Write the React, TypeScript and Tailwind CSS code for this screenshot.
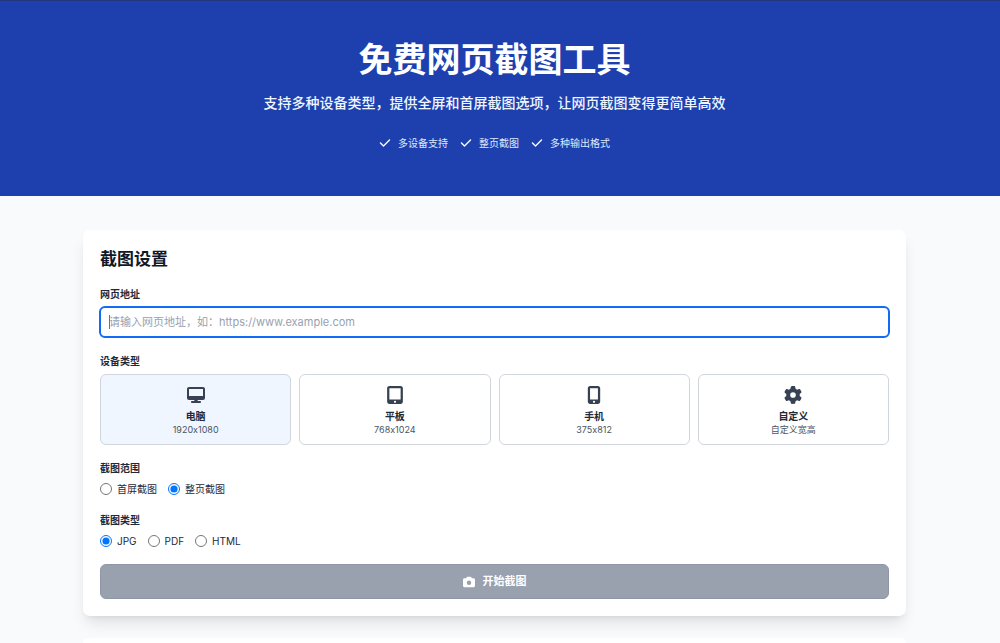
import { useState } from "react";
import {
  FaCamera,
  FaCheck,
  FaDesktop,
  FaGear,
  FaMobileScreenButton,
  FaTabletScreenButton,
} from "react-icons/fa6";

const features = ["多设备支持", "整页截图", "多种输出格式"];

const devices = [
  { id: "desktop", name: "电脑", size: "1920x1080", Icon: FaDesktop },
  { id: "tablet", name: "平板", size: "768x1024", Icon: FaTabletScreenButton },
  { id: "mobile", name: "手机", size: "375x812", Icon: FaMobileScreenButton },
  { id: "custom", name: "自定义", size: "自定义宽高", Icon: FaGear },
];

const ranges = [
  { value: "viewport", label: "首屏截图" },
  { value: "full", label: "整页截图" },
];

const formats = [
  { value: "jpg", label: "JPG" },
  { value: "pdf", label: "PDF" },
  { value: "html", label: "HTML" },
];

type RadioGroupProps = {
  legend: string;
  name: string;
  options: { value: string; label: string }[];
  value: string;
  onChange: (value: string) => void;
};

function RadioGroup({ legend, name, options, value, onChange }: RadioGroupProps) {
  return (
    <fieldset>
      <legend className="text-[10px] leading-4 font-semibold text-gray-800">{legend}</legend>
      <div className="mt-[5px] flex gap-[11px]">
        {options.map((option) => (
          <label key={option.value} className="flex items-center gap-[5px] text-[10px] leading-4 text-gray-800">
            <input
              type="radio"
              name={name}
              value={option.value}
              checked={value === option.value}
              onChange={() => onChange(option.value)}
              className="size-3 accent-[#0075ff]"
            />
            {option.label}
          </label>
        ))}
      </div>
    </fieldset>
  );
}

function Hero() {
  return (
    <header className="border-t border-[#24367c] bg-[#1e40af] pt-[39px] pr-[11px] pb-[45px] text-center text-white">
      <h1 className="text-[34px] leading-10 font-bold">免费网页截图工具</h1>
      <p className="mt-[13px] text-[14px] leading-5 font-medium text-blue-50">
        支持多种设备类型，提供全屏和首屏截图选项，让网页截图变得更简单高效
      </p>
      <ul className="mt-[22px] flex justify-center gap-3 text-[10px] leading-4 text-blue-100">
        {features.map((feature) => (
          <li key={feature} className="flex items-center gap-[7px]">
            <FaCheck className="size-3 text-blue-50" />
            {feature}
          </li>
        ))}
      </ul>
    </header>
  );
}

export default function App() {
  const [url, setUrl] = useState("");
  const [device, setDevice] = useState("desktop");
  const [range, setRange] = useState("full");
  const [format, setFormat] = useState("jpg");

  return (
    <div className="flex min-h-screen flex-col bg-gray-50 font-['Inter','Noto_Sans_CJK_SC',sans-serif] text-gray-900 [font-feature-settings:'calt'_0]">
      <Hero />
      <main className="flex flex-1 flex-col pt-[34px] pr-[11px]">
        <div className="mx-auto flex w-full max-w-[823px] flex-1 flex-col gap-[22px]">
          <form
            onSubmit={(e) => e.preventDefault()}
            className="flex flex-col gap-[15px] rounded-[7px] bg-white p-[17px] shadow-lg"
          >
            <h2 className="text-[17px] leading-6 font-bold">截图设置</h2>

            <div>
              <label htmlFor="url" className="block text-[10px] leading-4 font-semibold text-gray-800">
                网页地址
              </label>
              <div className="relative -mx-px mt-1">
                <input
                  id="url"
                  type="text"
                  autoFocus
                  value={url}
                  onChange={(e) => setUrl(e.target.value)}
                  placeholder="请输入网页地址，如：https://www.example.com"
                  className="block h-8 w-full rounded-md border-2 border-[#126bf3] bg-white px-2 text-[11px] leading-4 caret-transparent outline-none placeholder:text-gray-400"
                />
                {/* text cursor of the empty field */}
                {url === "" && <span className="absolute inset-y-[9px] left-2.5 w-px bg-gray-500" />}
              </div>
            </div>

            <div>
              <h3 className="text-[10px] leading-4 font-semibold text-gray-800">设备类型</h3>
              <div className="mt-[5px] grid grid-cols-4 gap-2">
                {devices.map(({ id, name, size, Icon }) => (
                  <button
                    key={id}
                    type="button"
                    aria-pressed={device === id}
                    onClick={() => setDevice(id)}
                    className={`flex flex-col items-center rounded-md border border-gray-300 pt-[11px] pb-2 ${
                      device === id ? "bg-[#eff6ff]" : "bg-white"
                    }`}
                  >
                    <Icon className="h-[18px] w-auto text-gray-700" />
                    <span className="mt-[5px] text-[10px] leading-[14px] font-semibold text-gray-800">{name}</span>
                    <span className="mt-px text-[9px] leading-3 text-gray-600">{size}</span>
                  </button>
                ))}
              </div>
            </div>

            <RadioGroup legend="截图范围" name="range" options={ranges} value={range} onChange={setRange} />
            <RadioGroup legend="截图类型" name="format" options={formats} value={format} onChange={setFormat} />

            <button
              type="submit"
              className="flex h-[35px] items-center justify-center gap-2 rounded-md border border-[#8f97a6] bg-gray-400 text-[11px] font-bold text-white"
            >
              <FaCamera className="size-3" />
              开始截图
            </button>
          </form>

          <section className="flex-1 rounded-t-[7px] bg-white" />
        </div>
      </main>
    </div>
  );
}
